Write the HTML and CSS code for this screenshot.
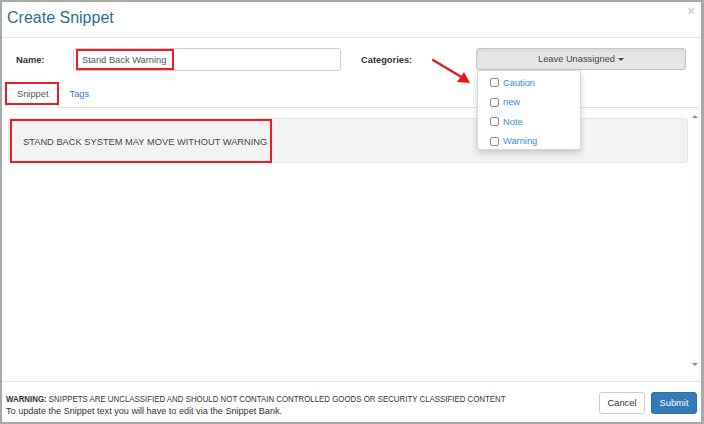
FILE: index.html
```html
<!DOCTYPE html>
<html>
<head>
<meta charset="utf-8">
<link rel="stylesheet" href="styles.css">
</head>
<body>
<div class="modal">
  <div class="modal-header">
    <h1 class="title">Create Snippet</h1>
    <span class="close">×</span>
  </div>
  <div class="form-row">
    <label class="lbl name-lbl">Name:</label>
    <div class="input"><span class="hl name-hl">Stand Back Warning</span></div>
    <label class="lbl cat-lbl">Categories:</label>
    <div class="dropdown">
      <div class="dd-btn">Leave Unassigned <span class="caret"></span></div>
      <ul class="dd-menu">
        <li><span class="cb"></span><span class="opt">Caution</span></li>
        <li><span class="cb"></span><span class="opt">new</span></li>
        <li><span class="cb"></span><span class="opt">Note</span></li>
        <li><span class="cb"></span><span class="opt">Warning</span></li>
      </ul>
    </div>
  </div>
  <ul class="tabs">
    <li class="tab active"><span class="hl tab-hl">Snippet</span></li>
    <li class="tab"><span class="tab-link">Tags</span></li>
  </ul>
  <div class="content">
    <div class="pane">
      <div class="well"><div class="hl snippet-hl">STAND BACK SYSTEM MAY MOVE WITHOUT WARNING</div></div>
    </div>
    <div class="scrollbar"><span class="arr up"></span><span class="arr down"></span></div>
  </div>
  <div class="footer">
    <div class="notice">
      <div class="line1"><span class="cond"><b>WARNING:</b> SNIPPETS ARE UNCLASSIFIED AND SHOULD NOT CONTAIN CONTROLLED GOODS OR SECURITY CLASSIFIED CONTENT</span></div>
      <div class="line2">To update the Snippet text you will have to edit via the Snippet Bank.</div>
    </div>
    <div class="actions">
      <span class="btn cancel">Cancel</span>
      <span class="btn submit">Submit</span>
    </div>
  </div>
  <svg class="arrow" width="44" height="30" viewBox="0 0 44 30">
    <line x1="2" y1="2" x2="32" y2="20" stroke="#e8141a" stroke-width="2.2" stroke-linecap="round"/>
    <polygon points="39,25 26,24 33,14" fill="#e8141a"/>
  </svg>
</div>
</body>
</html>
```
FILE: styles.css
```css
* { box-sizing: border-box; }
html, body { margin: 0; padding: 0; background: #fff; }
body { font-family: "Liberation Sans", Arial, sans-serif; font-size: 9.3px; color: #333; }

.modal {
  position: relative;
  width: 704px;
  height: 424px;
  border: 2px solid #a9a9a9;
  border-right-width: 3px;
  display: flex;
  flex-direction: column;
  background: #fff;
}

.modal-header {
  height: 36px;
  border-bottom: 1px solid #e5e5e5;
  display: flex;
  justify-content: space-between;
  align-items: flex-start;
  flex-shrink: 0;
}
.title {
  margin: 0;
  padding: 6px 0 0 5px;
  font-weight: normal;
  font-size: 16px;
  line-height: 20px;
  color: #2f6d8d;
}
.close {
  padding: 2px 6px 0 0;
  font-size: 13px;
  font-weight: bold;
  line-height: 14px;
  color: #cfcfcf;
}

.form-row {
  margin-top: 10px;
  padding-left: 14px;
  display: flex;
  align-items: center;
  height: 23px;
  flex-shrink: 0;
}
.lbl { font-weight: bold; color: #333; }
.name-lbl { width: 57px; }
.cat-lbl { width: 115px; margin-left: 20px; }
.input {
  width: 268px;
  height: 23px;
  border: 1px solid #cfcfcf;
  border-radius: 3px;
  display: flex;
  align-items: center;
  padding-left: 2px;
}
.hl { border: 2px solid #ee1c24; }
.name-hl {
  height: 21px;
  display: flex;
  align-items: center;
  padding: 0 6px 0 4px;
  color: #555;
}

.dropdown { position: relative; align-self: flex-start; }
.dd-btn {
  width: 210px;
  height: 22px;
  background: #e6e6e6;
  border: 1px solid #c4c4c4;
  border-radius: 3px;
  display: flex;
  align-items: center;
  justify-content: center;
  color: #444;
  box-shadow: inset 0 2px 3px rgba(0,0,0,0.06);
}
.caret {
  display: inline-block;
  margin-left: 3px;
  width: 0; height: 0;
  border-top: 3.5px solid #444;
  border-left: 3px solid transparent;
  border-right: 3px solid transparent;
}
.dd-menu {
  position: absolute;
  top: 22px;
  left: 1px;
  width: 104px;
  margin: 0;
  padding: 2px 0 0;
  list-style: none;
  background: #fff;
  border: 1px solid rgba(0,0,0,0.15);
  border-radius: 3px;
  box-shadow: 0 3px 6px rgba(0,0,0,0.18);
  height: 80px;
}
.dd-menu li {
  height: 19.5px;
  display: flex;
  align-items: center;
  padding-left: 12px;
}
.cb {
  width: 9px; height: 9px;
  border: 1px solid #8a8a8a;
  border-radius: 2px;
  margin-right: 4px;
  background: #fff;
}
.opt { color: #3d8ccc; }

.tabs {
  list-style: none;
  margin: 10px 3px 0 3px;
  padding: 0;
  display: flex;
  height: 27px;
  flex-shrink: 0;
}
.tabs::after {
  content: "";
  flex: 1;
  border-bottom: 1px solid #e0e0e0;
}
.tab { height: 27px; padding-top: 1px; }
.tab.active { padding-bottom: 3px; }
.tab-hl {
  height: 23px;
  display: flex;
  align-items: center;
  padding: 1px 8px 0 10px;
  color: #555;
}
.tab:not(.active) { border-bottom: 1px solid #e0e0e0; padding-left: 11px; }
.tab-link { display: flex; height: 24px; align-items: center; color: #337ab7; }

.content {
  flex: 1;
  display: flex;
  border-bottom: 1px solid #e5e5e5;
}
.pane { flex: 1; padding: 10px 0 0 6px; }
.well {
  height: 45px;
  background: #f3f3f3;
  border: 1px solid #e6e6e6;
  border-radius: 4px;
  padding-left: 1px;
  display: flex;
}
.snippet-hl {
  width: 262px;
  display: flex;
  align-items: center;
  padding: 1px 0 0 11px;
  color: #444;
  margin-bottom: -1px;
}
.scrollbar {
  width: 13px;
  display: flex;
  flex-direction: column;
  justify-content: space-between;
  align-items: center;
  padding: 7px 0 15px;
  background: #fcfcfc;
}
.arr { width: 0; height: 0; border-left: 3px solid transparent; border-right: 3px solid transparent; }
.arr.up { border-bottom: 3px solid #8c8c8c; }
.arr.down { border-top: 3px solid #8c8c8c; }

.footer {
  height: 40px;
  display: flex;
  align-items: center;
  justify-content: space-between;
  padding: 2px 4px 0 4px;
  flex-shrink: 0;
}
.notice { line-height: 12px; font-size: 9.1px; color: #333; padding-top: 3px; }
.line1 { white-space: nowrap; height: 12px; }
.cond { display: inline-block; transform: scaleX(0.865); transform-origin: left center; }
.actions { display: flex; gap: 6px; }
.btn {
  width: 46px;
  height: 22px;
  display: flex;
  align-items: center;
  justify-content: center;
  border-radius: 3px;
  font-size: 9.3px;
}
.cancel { border: 1px solid #cccccc; color: #333; background: #fff; }
.submit { background: #337ab7; border: 1px solid #2e6da4; color: #fff; }

.arrow { position: absolute; left: 429px; top: 56px; }
```
